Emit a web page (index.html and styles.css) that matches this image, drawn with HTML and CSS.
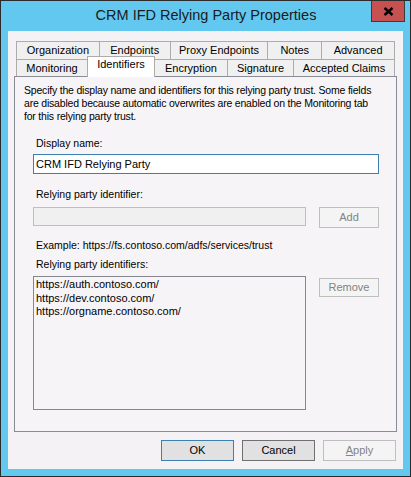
FILE: index.html
```html
<!DOCTYPE html>
<html>
<head>
<meta charset="utf-8">
<link rel="stylesheet" href="styles.css">
</head>
<body>
<div class="window">
  <div class="titlebar">
    <div class="title">CRM IFD Relying Party Properties</div>
    <div class="close"><svg width="11" height="9" viewBox="0 0 11 9"><path d="M1.5 1 L9.5 8 M9.5 1 L1.5 8" stroke="#000" stroke-width="2.4" fill="none"/></svg></div>
  </div>
  <div class="client">
    <div class="tabs">
      <div class="tabrow row1">
        <div class="tab t-org">Organization</div>
        <div class="tab t-end">Endpoints</div>
        <div class="tab t-proxy">Proxy Endpoints</div>
        <div class="tab t-notes">Notes</div>
        <div class="tab t-adv last">Advanced</div>
      </div>
      <div class="tabrow row2">
        <div class="tab t-mon">Monitoring</div>
        <div class="tab t-ident selected">Identifiers</div>
        <div class="tab t-enc">Encryption</div>
        <div class="tab t-sig">Signature</div>
        <div class="tab t-acc last">Accepted Claims</div>
      </div>
      <div class="panel">
        <p class="desc">Specify the display name and identifiers for this relying party trust. Some fields<br>are disabled because automatic overwrites are enabled on the Monitoring tab<br>for this relying party trust.</p>
        <div class="label l-display">Display name:</div>
        <div class="input focused">CRM IFD Relying Party</div>
        <div class="label l-ident">Relying party identifier:</div>
        <div class="row r-ident">
          <div class="input disabled"></div>
          <div class="btn btn-disabled">Add</div>
        </div>
        <div class="label l-example">Example: https://fs.contoso.com/adfs/services/trust</div>
        <div class="label l-list">Relying party identifiers:</div>
        <div class="row r-list">
          <div class="listbox">
            <div>https://auth.contoso.com/</div>
            <div>https://dev.contoso.com/</div>
            <div>https://orgname.contoso.com/</div>
          </div>
          <div class="btn btn-disabled btn-remove">Remove</div>
        </div>
      </div>
    </div>
    <div class="footer">
      <div class="btn dlg default">OK</div>
      <div class="btn dlg cancel">Cancel</div>
      <div class="btn dlg btn-disabled"><u>A</u>pply</div>
    </div>
  </div>
</div>
</body>
</html>
```

FILE: styles.css
```css
* { box-sizing: border-box; }
html, body { margin: 0; padding: 0; }
body {
  width: 411px;
  height: 477px;
  overflow: hidden;
  font-family: "Liberation Sans", Arial, sans-serif;
  font-size: 10.5px;
  color: #000;
}
.window {
  width: 411px;
  height: 477px;
  border: 1px solid #2b2b2b;
  background: #62c8ef;
  padding: 0 7px 7px 7px;
  display: flex;
  flex-direction: column;
}
.titlebar {
  height: 30px;
  display: grid;
  grid-template-columns: 1fr auto;
  margin: 0 -1px 0 0;
}
.title {
  grid-column: 1 / 3;
  grid-row: 1;
  text-align: center;
  font-size: 14.5px;
  line-height: 29px;
  color: #1b1b1b;
  padding-left: 0;
}
.close {
  grid-column: 2;
  grid-row: 1;
  width: 34px;
  height: 21px;
  background: #c75050;
  border: 1px solid #3b3b3b;
  border-top: none;
  display: flex;
  align-items: center;
  justify-content: center;
  margin-right: -1px;
}
.client {
  flex: 1;
  background: #f5f2f5;
  padding: 10px 6px 0 6px;
  display: flex;
  flex-direction: column;
}
.tabs { display: flex; flex-direction: column; }
.tabrow {
  display: flex;
  padding: 0 2px;
  align-items: flex-end;
}
.row1 { height: 18px; }
.row2 { height: 17px; position: relative; z-index: 1; }
.tab {
  background: #f0f0f0;
  border: 1px solid #acacac;
  border-right: none;
  border-bottom: none;
  text-align: center;
  white-space: nowrap;
  font-size: 11px;
  line-height: 16px;
}
.row1 .tab { height: 18px; }
.row2 .tab { height: 17px; line-height: 17px; }
.tab.last { border-right: 1px solid #acacac; }
.t-org { width: 83px; }
.t-end { width: 71px; }
.t-proxy { width: 98px; }
.t-notes { width: 54px; }
.t-adv { width: 74px; }
.t-mon { width: 71px; }
.t-ident { width: 68px; }
.t-enc { width: 73px; }
.t-sig { width: 66px; }
.t-acc { width: 102px; }
.row2 .tab.selected {
  background: #fff;
  height: 21px;
  line-height: 15px;
  margin-bottom: -1px;
  border-right: 1px solid #acacac;
  margin-right: -1px;
}
.panel {
  height: 356px;
  border: 1px solid #898c95;
  background: #f7f4f7;
  padding: 7px 4px 0 9px;
}
.desc {
  margin: 0;
  line-height: 13px;
  font-size: 10.5px;
  letter-spacing: -0.2px;
  white-space: nowrap;
}
.label {
  line-height: 13px;
  margin-left: 12px;
}
.l-display { margin-top: 14px; }
.l-ident { margin-top: 14px; }
.l-example { margin-top: 11px; }
.l-list { margin-top: 6px; }
.input {
  margin-left: 9px;
  width: 346px;
  height: 20px;
  background: #fff;
  border: 1px solid #abadb3;
  font-size: 11px;
  line-height: 18px;
  padding-left: 2px;
}
.input.focused { margin-top: 4px; border-color: #3c7fb1; }
.row {
  display: flex;
  align-items: flex-start;
  margin-left: 9px;
}
.r-ident { margin-top: 6px; }
.input.disabled {
  margin-left: 0;
  width: 273px;
  height: 19px;
  background: #f0f0f0;
  border-color: #bfbfbf;
}
.btn {
  width: 60px;
  height: 21px;
  margin-left: 13px;
  border: 1px solid #acacac;
  background: #e1e1e1;
  text-align: center;
  line-height: 19px;
  font-size: 11px;
}
.btn-disabled {
  background: #f4f4f4;
  border-color: #bfbfbf;
  color: #838383;
}
.r-list { margin-top: 5px; }
.listbox {
  width: 273px;
  height: 134px;
  background: #f7f4f7;
  border: 1px solid #828790;
  padding: 1px 2px;
  line-height: 13.5px;
  font-size: 11px;
}
.btn-remove { margin-top: 2px; height: 19px; line-height: 17px; }
.footer {
  display: flex;
  justify-content: flex-end;
  gap: 8px;
  padding: 8px 1px 0 0;
}
.btn.dlg {
  width: 73px;
  height: 21px;
  margin: 0;
}
.btn.default { border-color: #3c7fb1; }
.btn.cancel { border-color: #707070; }
```
